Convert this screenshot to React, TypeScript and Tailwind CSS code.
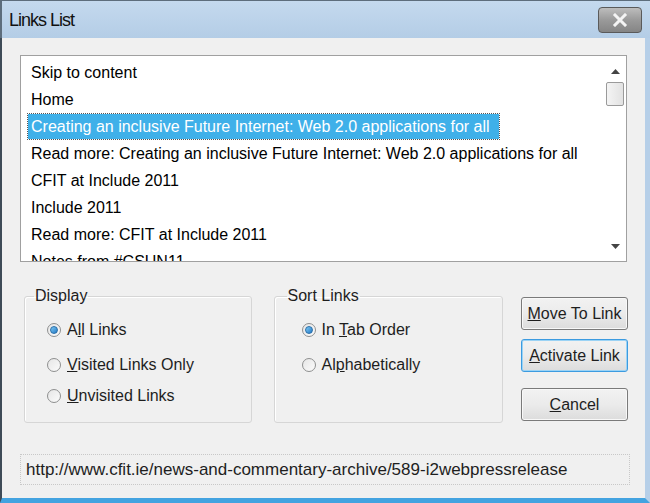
import React from "react";

const links = [
  "Skip to content",
  "Home",
  "Creating an inclusive Future Internet: Web 2.0 applications for all",
  "Read more: Creating an inclusive Future Internet: Web 2.0 applications for all",
  "CFIT at Include 2011",
  "Include 2011",
  "Read more: CFIT at Include 2011",
  "Notes from #CSUN11",
];

const Radio = ({ checked }: { checked?: boolean }) => (
  <span className="w-[14px] h-[14px] rounded-full border border-[#8e8f8f] bg-gradient-to-br from-[#e6e6e6] to-[#fbfbfb] flex items-center justify-center shrink-0">
    {checked && (
      <span className="w-[8px] h-[8px] rounded-full bg-gradient-to-br from-[#7ecbf5] to-[#1f78c4] border border-[#2a6ea8]" />
    )}
  </span>
);

const Option = ({
  checked,
  children,
}: {
  checked?: boolean;
  children: React.ReactNode;
}) => (
  <label className="flex items-center gap-[6px] h-[20px]">
    <Radio checked={checked} />
    <span>{children}</span>
  </label>
);

const Btn = ({
  focus,
  children,
}: {
  focus?: boolean;
  children: React.ReactNode;
}) => (
  <button
    className={`w-[107px] h-[33px] rounded-[3px] border bg-gradient-to-b from-[#f2f2f2] via-[#ebebeb] to-[#dcdcdc] text-[#1e1e1e] text-[16px] ${
      focus
        ? "border-[#3c9be0] shadow-[inset_0_0_0_1px_#9bd3f5]"
        : "border-[#7a7a7a] shadow-[inset_0_0_0_1px_#f8f8f8]"
    }`}
  >
    {children}
  </button>
);

export default function App() {
  return (
    <div
      className="w-[650px] h-[503px] flex flex-col bg-[#f0f0f0] overflow-hidden"
      style={{ fontFamily: '"Liberation Sans", Arial, sans-serif' }}
    >
      {/* title bar */}
      <div className="h-[38px] shrink-0 flex items-center pl-[7px] pr-[8px] bg-gradient-to-b from-[#c4d9ee] to-[#b4cde6] border-l-2 border-t border-[#5d6d7c]">
        <span className="text-[18px] text-[#111] tracking-[-1px] pt-[2px]">Links List</span>
        <div className="ml-auto w-[44px] h-[26px] rounded-[4px] border border-[#5a5a5a] bg-gradient-to-b from-[#bdbdbd] via-[#9a9a9a] to-[#858585] flex items-center justify-center">
          <svg width="16" height="14" viewBox="0 0 16 14">
            <path d="M3 2 L13 12 M13 2 L3 12" stroke="#f4f4f4" strokeWidth="3" strokeLinecap="square" />
          </svg>
        </div>
      </div>

      {/* body */}
      <div className="flex-1 flex flex-col border-l-2 border-l-[#3e4b57] border-r-[5px] border-r-[#b6cfe8] border-b-[5px] border-b-[#43a3e0] pl-[18px] pr-[17px] pt-[17px]">
        {/* list box */}
        <div className="w-[607px] h-[207px] bg-white border border-[#a0a0a0] flex overflow-hidden text-[16px] text-black">
          <div className="flex-1 pt-[3px] pl-[7px] overflow-hidden">
            {links.map((l, i) => (
              <div key={l} className="h-[27px] flex items-center">
                <span
                  className={`pl-[3px] pr-[9px] h-[25px] flex items-center whitespace-nowrap ${
                    i === 2 ? "bg-[#3fb0e9] text-white outline outline-1 outline-dotted outline-[#555]" : ""
                  }`}
                >
                  {l}
                </span>
              </div>
            ))}
          </div>
          <div className="w-[22px] flex flex-col items-center pt-[13px] pb-[12px]">
            <svg width="9" height="5" viewBox="0 0 9 5">
              <path d="M0 5 L4.5 0 L9 5 Z" fill="#444" />
            </svg>
            <div className="mt-[8px] w-[18px] h-[24px] rounded-[2px] border border-[#9a9a9a] bg-gradient-to-r from-[#f4f4f4] to-[#e2e2e2]" />
            <svg className="mt-auto" width="9" height="5" viewBox="0 0 9 5">
              <path d="M0 0 L9 0 L4.5 5 Z" fill="#444" />
            </svg>
          </div>
        </div>

        {/* options row */}
        <div className="flex mt-[22px] text-[16px] text-[#1e1e1e]">
          <fieldset className="ml-[4px] w-[228px] h-[139px] border border-[#d6d6d6] shadow-[inset_1px_1px_0_#fff] rounded-[3px] px-[9px]">
            <legend className="px-[1px]">Display</legend>
            <div className="flex flex-col pl-[13px] pt-[12px]">
              <Option checked>
                A<u>l</u>l Links
              </Option>
              <div className="h-[15px]" />
              <Option>
                <u>V</u>isited Links Only
              </Option>
              <div className="h-[11px]" />
              <Option>
                <u>U</u>nvisited Links
              </Option>
            </div>
          </fieldset>

          <fieldset className="ml-[22px] w-[230px] h-[139px] border border-[#d6d6d6] shadow-[inset_1px_1px_0_#fff] rounded-[3px] px-[12px]">
            <legend className="px-[1px]">Sort Links</legend>
            <div className="flex flex-col pl-[15px] pt-[12px]">
              <Option checked>
                In <u>T</u>ab Order
              </Option>
              <div className="h-[15px]" />
              <Option>
                Al<u>p</u>habetically
              </Option>
            </div>
          </fieldset>

          <div className="ml-[18px] flex flex-col pt-[13px]">
            <Btn>
              <u>M</u>ove To Link
            </Btn>
            <div className="h-[9px]" />
            <Btn focus>
              <u>A</u>ctivate Link
            </Btn>
            <div className="h-[16px]" />
            <Btn>
              <u>C</u>ancel
            </Btn>
          </div>
        </div>

        {/* url field */}
        <div className="mt-[31px] w-[610px] h-[31px] border border-dotted border-[#c8c8c8] flex items-center pl-[5px] text-[17px] text-[#1e1e1e]">
          http://www.cfit.ie/news-and-commentary-archive/589-i2webpressrelease
        </div>
      </div>
    </div>
  );
}
